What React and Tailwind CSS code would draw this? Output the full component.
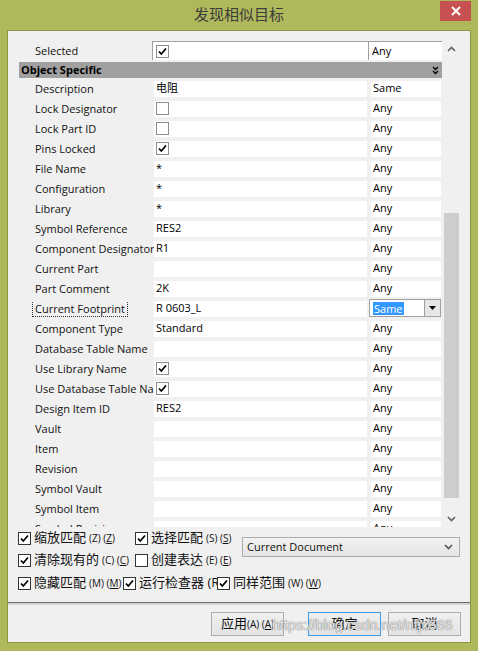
import React from 'react'

const UI_FONT = "font-['Open_Sans','Noto_Sans_CJK_SC',sans-serif]"

const rows = [
  { label: 'Description', value: '电阻', match: 'Same' },
  { label: 'Lock Designator', check: false, match: 'Any' },
  { label: 'Lock Part ID', check: false, match: 'Any' },
  { label: 'Pins Locked', check: true, match: 'Any' },
  { label: 'File Name', value: '*', match: 'Any' },
  { label: 'Configuration', value: '*', match: 'Any' },
  { label: 'Library', value: '*', match: 'Any' },
  { label: 'Symbol Reference', value: 'RES2', match: 'Any' },
  { label: 'Component Designator', value: 'R1', match: 'Any' },
  { label: 'Current Part', value: '', match: 'Any' },
  { label: 'Part Comment', value: '2K', match: 'Any' },
  { label: 'Current Footprint', value: 'R 0603_L', match: 'Same', editing: true },
  { label: 'Component Type', value: 'Standard', match: 'Any' },
  { label: 'Database Table Name', value: '', match: 'Any' },
  { label: 'Use Library Name', check: true, match: 'Any' },
  { label: 'Use Database Table Name', check: true, match: 'Any' },
  { label: 'Design Item ID', value: 'RES2', match: 'Any' },
  { label: 'Vault', value: '', match: 'Any' },
  { label: 'Item', value: '', match: 'Any' },
  { label: 'Revision', value: '', match: 'Any' },
  { label: 'Symbol Vault', value: '', match: 'Any' },
  { label: 'Symbol Item', value: '', match: 'Any' },
  { label: 'Symbol Revision', value: '', match: 'Any' },
]

const CheckMark = () => (
  <svg width="11" height="11" viewBox="0 0 11 11" className="block">
    <path d="M2 5.5 L4.3 8 L9 2.5" fill="none" stroke="#000" strokeWidth="1.8" />
  </svg>
)

const CellBox = ({ checked, dark }) => (
  <div
    className={`w-[13px] h-[13px] bg-white border flex items-center justify-center shrink-0 ${
      dark ? 'border-[#333333]' : 'border-[#8c8c8c]'
    }`}
  >
    {checked && <CheckMark />}
  </div>
)

const Chevron = ({ up, color = '#606060' }) => (
  <svg width="9" height="6" viewBox="0 0 9 6" className="block">
    <path
      d={up ? 'M1 5 L4.5 1.5 L8 5' : 'M1 1 L4.5 4.5 L8 1'}
      fill="none"
      stroke={color}
      strokeWidth="1.6"
    />
  </svg>
)

const PropRow = ({ row }) => (
  <div className="h-[20px] pt-[1px] pb-[3px] flex">
    <div className="w-[135px] shrink-0 pl-[16px] pr-[2px] pb-[1px] flex items-center overflow-hidden">
      <span
        className={`whitespace-nowrap text-[11px] leading-[15px] text-[#111] ${
          row.editing ? 'outline outline-1 outline-dotted outline-[#333] -ml-[2px] pl-[2px] pr-[2px]' : ''
        }`}
      >
        {row.label}
      </span>
    </div>
    <div className="w-[213px] shrink-0 bg-white pl-[2px] pb-[1px] flex items-center">
      {row.check !== undefined ? (
        <CellBox checked={row.check} />
      ) : (
        <span className="text-[11px] text-black whitespace-nowrap">{row.value}</span>
      )}
    </div>
    {row.editing ? (
      <div className="ml-[2px] w-[72px] h-[18px] -mt-[2px] border border-[#a0a0a0] bg-white flex items-center pl-[3px]">
        <span className="bg-[#3399ff] text-white text-[11px] leading-[13px] px-[1px]">{row.match}</span>
        <div className="ml-auto w-[16px] h-[16px] border-l border-[#a0a0a0] bg-[#e6e6e6] flex items-center justify-center">
          <svg width="7" height="4" viewBox="0 0 7 4">
            <path d="M0 0 H7 L3.5 4 Z" fill="#000" />
          </svg>
        </div>
      </div>
    ) : (
      <div className="ml-[4px] w-[70px] shrink-0 bg-white pl-[2px] pb-[1px] flex items-center">
        <span className="text-[11px] text-black">{row.match}</span>
      </div>
    )}
  </div>
)

const Option = ({ checked, text, keyName, width }) => (
  <div className={`flex items-center gap-[3px] overflow-hidden whitespace-nowrap shrink-0 ${width}`}>
    <CellBox checked={checked} dark />
    <span className="text-[13px] text-[#111]">{text}</span>
    {keyName && (
      <span className="text-[10px] text-[#111]">
        ({keyName}) (<span className="underline">{keyName}</span>)
      </span>
    )}
  </div>
)

const DialogButton = ({ children, focused }) => (
  <button
    className={`w-[73px] h-[24px] border bg-gradient-to-b from-[#f0f0f0] to-[#e3e3e3] text-[13px] text-[#111] flex items-center justify-center ${
      focused ? 'border-[#3c9ce6]' : 'border-[#adadad]'
    }`}
  >
    {children}
  </button>
)

export default function App() {
  return (
    <div className={`w-[478px] h-[651px] bg-[#afb85a] flex flex-col ${UI_FONT}`}>
      {/* Title bar */}
      <div className="relative h-[30px] flex items-center justify-center">
        <span className="text-[15px] text-[#3c3c3c] pb-[1px]">发现相似目标</span>
        <div className="absolute right-[7px] top-[1px] w-[31px] h-[20px] bg-[#c75050] flex items-center justify-center">
          <svg width="10" height="10" viewBox="0 0 10 10">
            <path d="M1 1 L9 9 M9 1 L1 9" stroke="#fff" strokeWidth="2" />
          </svg>
        </div>
      </div>

      {/* Client area */}
      <div className="ml-[7px] w-[464px] h-[613px] border border-[#8d9444] bg-[#f0f0f0] flex flex-col">
        {/* Property grid */}
        <div className="ml-[11px] mt-[9px] w-[441px] h-[487px] flex overflow-hidden">
          <div className="w-[423px] shrink-0 flex flex-col">
            <div className="h-[20px] pt-[1px] flex shrink-0">
              <div className="w-[133px] shrink-0 pl-[16px] pt-[1px] flex items-center">
                <span className="text-[11px] text-[#111]">Selected</span>
              </div>
              <div className="w-[216px] shrink-0 bg-white border-t border-l border-[#a0a0a0] pl-[3px] flex items-center">
                <CellBox checked />
              </div>
              <div className="w-[74px] shrink-0 bg-white border-t border-l border-[#a0a0a0] pl-[3px] pt-[1px] flex items-center">
                <span className="text-[11px] text-black">Any</span>
              </div>
            </div>
            <div className="mt-[2px] h-[16px] bg-[#a0a0a0] flex items-center pl-[2px] pr-[3px] shrink-0">
              <span className="text-[11px] font-bold text-black">Object Specific</span>
              <svg width="7" height="9" viewBox="0 0 7 9" className="ml-auto">
                <path d="M1 1 L3.5 3.5 L6 1 M1 5 L3.5 7.5 L6 5" fill="none" stroke="#000" strokeWidth="1.4" />
              </svg>
            </div>
            <div className="mt-[2px] flex flex-col shrink-0">
              {rows.map((row) => (
                <PropRow key={row.label} row={row} />
              ))}
            </div>
          </div>

          {/* Vertical scroll bar */}
          <div className="ml-[1px] w-[17px] shrink-0 flex flex-col">
            <div className="h-[17px] flex items-center justify-center">
              <Chevron up />
            </div>
            <div className="flex-1 pt-[156px] flex justify-center">
              <div className="w-[15px] h-[285px] bg-[#cdcdcd]" />
            </div>
            <div className="h-[17px] flex items-center justify-center">
              <Chevron />
            </div>
          </div>
        </div>

        {/* Search options */}
        <div className="pl-[10px] flex">
          <div className="flex flex-col">
            <div className="h-[22px] flex items-center">
              <Option checked text="缩放匹配" keyName="Z" width="w-[117px]" />
              <Option checked text="选择匹配" keyName="S" width="w-[107px]" />
            </div>
            <div className="h-[22px] flex items-center">
              <Option checked text="清除现有的" keyName="C" width="w-[117px]" />
              <Option checked={false} text="创建表达" keyName="E" width="w-[107px]" />
            </div>
          </div>
          <div className="mt-[10px] w-[218px] h-[20px] border border-[#acacac] bg-gradient-to-b from-[#f2f2f2] to-[#e5e5e5] flex items-center pl-[4px] pr-[6px]">
            <span className="text-[11px] text-[#111]">Current Document</span>
            <span className="ml-auto">
              <Chevron color="#555" />
            </span>
          </div>
        </div>
        <div className="pl-[10px] mt-[1px] h-[22px] flex items-center">
          <Option checked text="隐藏匹配" keyName="M" width="w-[105px]" />
          <Option checked text="运行检查器 (R) (R)" width="w-[94px]" />
          <Option checked text="同样范围" keyName="W" width="w-[110px]" />
        </div>

        {/* Separator */}
        <div className="mt-[8px] h-[1px] bg-[#6a6a6a]" />
        <div className="h-[2px] bg-[#d4d4d4]" />

        {/* Buttons */}
        <div className="relative mt-[7px] flex pl-[203px]">
          <DialogButton>
            应用<span className="text-[10px]">(A) (<span className="underline">A</span>)</span>
          </DialogButton>
          <div className="ml-[24px]">
            <DialogButton focused>确定</DialogButton>
          </div>
          <div className="ml-[7px]">
            <DialogButton>取消</DialogButton>
          </div>
          <span className="absolute left-[264px] top-[3px] text-[14.5px] text-white/80 font-['Liberation_Sans',sans-serif] [text-shadow:0_0_1px_#777,0_0_1px_#777] whitespace-nowrap pointer-events-none">
            https://blog.csdn.net/nfjx666
          </span>
        </div>
      </div>
    </div>
  )
}
